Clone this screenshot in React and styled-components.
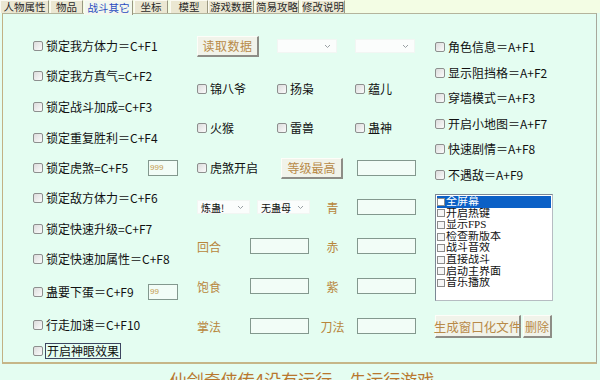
import React from "react";
import styled, { createGlobalStyle } from "styled-components";

const GlobalStyle = createGlobalStyle`
  html, body {
    margin: 0;
    padding: 0;
    width: 600px;
    height: 380px;
    overflow: hidden;
    background: #e4fdf1;
    font-family: "Noto Sans CJK SC", "Liberation Sans", sans-serif;
  }
`;

const Root = styled.div`
  width: 600px;
  height: 380px;
  overflow: hidden;
`;

const TabBar = styled.div`
  display: flex;
  height: 13px;
  background: #f3fde4;
`;

const Tab = styled.div`
  width: ${(p) => p.w}px;
  flex: none;
  margin-right: ${(p) => p.gap}px;
  height: ${(p) => (p.active ? 15 : 13)}px;
  box-sizing: border-box;
  display: flex;
  align-items: center;
  justify-content: center;
  font-size: 10.5px;
  line-height: 12px;
  white-space: nowrap;
  overflow: hidden;
  color: ${(p) => (p.active ? "#2a4cc0" : "#2a2a2a")};
  background: ${(p) => (p.active ? "#f2f8ee" : "#ebe7d2")};
  border-top: 1px solid #fbfaf2;
  border-left: 1px solid #fbfaf2;
  border-right: 1px solid #9a9780;
  position: relative;
  z-index: ${(p) => (p.active ? 2 : 1)};
`;

const Panel = styled.div`
  display: flex;
  margin-left: 2px;
  width: 595px;
  height: 351px;
  box-sizing: border-box;
  background: #e4fdf1;
  border-top: 1px solid #b4b49c;
  border-left: 1px solid #c2b184;
  border-right: 1px solid #a7a89c;
  border-bottom: 2px solid #c6b688;
`;

const LeftCol = styled.div`
  width: 194px;
  box-sizing: border-box;
  padding: 17px 0 0 30px;
  display: flex;
  flex-direction: column;
`;

const MidCol = styled.div`
  width: 238px;
  display: flex;
  flex-direction: column;
`;

const RightCol = styled.div`
  width: 150px;
  box-sizing: border-box;
  padding-top: 20px;
  display: flex;
  flex-direction: column;
`;

const LeftRow = styled.div`
  height: ${(p) => p.h}px;
  width: 145px;
  display: flex;
  align-items: center;
  justify-content: space-between;
`;

const MidRow = styled.div`
  height: 24px;
  margin-top: ${(p) => p.top}px;
  display: flex;
  align-items: center;
`;

const Cell = styled.div`
  width: ${(p) => p.w}px;
  flex: none;
  display: flex;
  align-items: center;
  justify-content: ${(p) => (p.center ? "center" : "flex-start")};
`;

const RightRow = styled.div`
  height: ${(p) => p.h}px;
  display: flex;
  align-items: center;
`;

const Check = styled.label`
  display: flex;
  align-items: center;
  gap: 3px;
  font-size: 12px;
  line-height: 14px;
  color: #111;
  white-space: nowrap;
`;

const Box = styled.span`
  width: 8px;
  height: 8px;
  flex: none;
  border: 1px solid #8d8f8e;
  border-radius: 2px;
  background: linear-gradient(135deg, #dcdcdc, #fbfbfb);
`;

const Focus = styled.span`
  outline: 1px solid #3d4560;
  padding: 0 1px;
`;

const Btn = styled.div`
  width: ${(p) => p.w}px;
  height: ${(p) => p.h}px;
  box-sizing: border-box;
  display: flex;
  align-items: center;
  justify-content: center;
  font-size: ${(p) => p.fs || 12}px;
  color: #b88a48;
  background: #f1f3ea;
  border-top: 1px solid #fdfdf8;
  border-left: 1px solid #fdfdf8;
  border-right: 2px solid #8d8d86;
  border-bottom: 2px solid #8d8d86;
  white-space: nowrap;
  letter-spacing: ${(p) => p.ls || 0}px;
`;

const Select = styled.div`
  width: ${(p) => p.w}px;
  height: 14px;
  box-sizing: border-box;
  background: #fbfdfc;
  border: 1px solid #f2f6f3;
  display: flex;
  align-items: center;
  justify-content: space-between;
  padding: 0 5px 0 3px;
  font-size: 10px;
  color: #111;
`;

const Chevron = () => (
  <svg width="7" height="5" viewBox="0 0 7 5">
    <path d="M1 1 L3.5 3.5 L6 1" fill="none" stroke="#9aa0a4" strokeWidth="1" />
  </svg>
);

const Input = styled.div`
  width: ${(p) => p.w}px;
  height: 16px;
  box-sizing: border-box;
  border: 1px solid #83988e;
  background: #f2fdf7;
  font-size: 8px;
  line-height: 14px;
  color: #c29a4c;
  padding-left: 1px;
  font-family: "Liberation Sans", sans-serif;
`;

const Label = styled.span`
  font-size: 12px;
  color: #b8863c;
`;

const ListBox = styled.div`
  margin-top: 7px;
  width: 118px;
  height: 107px;
  box-sizing: border-box;
  background: #fff;
  border-top: 1px solid #7b8794;
  border-left: 1px solid #7b8794;
  border-right: 1px solid #b6bcc2;
  border-bottom: 1px solid #b6bcc2;
  padding: 1px;
`;

const ListItem = styled.div`
  height: 11.6px;
  display: flex;
  align-items: center;
  gap: 1px;
  overflow: hidden;
  font-size: 11px;
  line-height: 11.6px;
  color: ${(p) => (p.sel ? "#fff" : "#111")};
  background: ${(p) => (p.sel ? "#0b60c6" : "transparent")};
  font-family: "Liberation Serif", "Noto Sans CJK SC", serif;
`;

const SmallBox = styled.span`
  width: 6px;
  height: 6px;
  flex: none;
  border: 1px solid #8c8c8c;
  background: ${(p) => (p.sel ? "#fff" : "#f6f6f6")};
`;

const ButtonRow = styled.div`
  margin-top: 14px;
  display: flex;
  gap: 2px;
`;

const Status = styled.div`
  text-align: center;
  padding-top: 5px;
  padding-left: 4px;
  font-size: 17px;
  line-height: 22px;
  color: #b8772e;
  white-space: nowrap;
`;

const tabs = [
  ["人物属性", 49, 1],
  ["物品", 33, 1],
  ["战斗其它", 49, 1],
  ["坐标", 34, 2],
  ["模型", 38, 0],
  ["游戏数据", 46, 1],
  ["简易攻略", 44, 2],
  ["修改说明", 44, 0],
];

const leftRows = [
  ["锁定我方体力＝C+F1", 30],
  ["锁定我方真气=C+F2", 30],
  ["锁定战斗加成=C+F3", 32],
  ["锁定重复胜利＝C+F4", 30],
  ["锁定虎煞=C+F5", 30, "999"],
  ["锁定敌方体力＝C+F6", 32],
  ["锁定快速升级=C+F7", 30],
  ["锁定快速加属性＝C+F8", 30],
  ["蛊要下蛋＝C+F9", 36, "99"],
  ["行走加速＝C+F10", 30],
];

const rightRows = [
  ["角色信息＝A+F1", 26],
  ["显示阻挡格＝A+F2", 25],
  ["穿墙模式＝A+F3", 26],
  ["开启小地图＝A+F7", 25],
  ["快速剧情＝A+F8", 26],
  ["不遇敌＝A+F9", 25],
];

const listItems = ["全屏幕", "开启热键", "显示FPS", "检查新版本", "战斗音效", "直接战斗", "启动主界面", "音乐播放"];

const CheckItem = ({ children }) => (
  <Check>
    <Box />
    {children}
  </Check>
);

export default function App() {
  return (
    <Root>
      <GlobalStyle />
      <TabBar>
        {tabs.map(([t, w, g], i) => (
          <Tab key={t} w={w} gap={g} active={i === 2}>
            {t}
          </Tab>
        ))}
      </TabBar>
      <Panel>
        <LeftCol>
          {leftRows.map(([t, h, v]) => (
            <LeftRow key={t} h={h}>
              <CheckItem>{t}</CheckItem>
              {v && <Input w={30}>{v}</Input>}
            </LeftRow>
          ))}
          <LeftRow h={22}>
            <CheckItem>
              <Focus>开启神眼效果</Focus>
            </CheckItem>
          </LeftRow>
        </LeftCol>

        <MidCol>
          <MidRow top={20}>
            <Cell w={80}>
              <Btn w={62} h={21} ls={0.5}>读取数据</Btn>
            </Cell>
            <Cell w={78}>
              <Select w={60}>
                <span />
                <Chevron />
              </Select>
            </Cell>
            <Cell w={62}>
              <Select w={60}>
                <span />
                <Chevron />
              </Select>
            </Cell>
          </MidRow>
          <MidRow top={19}>
            <Cell w={80}><CheckItem>锦八爷</CheckItem></Cell>
            <Cell w={78}><CheckItem>扬枭</CheckItem></Cell>
            <Cell w={62}><CheckItem>蕴儿</CheckItem></Cell>
          </MidRow>
          <MidRow top={15}>
            <Cell w={80}><CheckItem>火猴</CheckItem></Cell>
            <Cell w={78}><CheckItem>雷兽</CheckItem></Cell>
            <Cell w={62}><CheckItem>蛊神</CheckItem></Cell>
          </MidRow>
          <MidRow top={16}>
            <Cell w={84}><CheckItem>虎煞开启</CheckItem></Cell>
            <Cell w={76}>
              <Btn w={62} h={21}>等级最高</Btn>
            </Cell>
            <Cell w={60}><Input w={59} /></Cell>
          </MidRow>
          <MidRow top={15}>
            <Cell w={60}>
              <Select w={53}>
                <span>炼蛊!</span>
                <Chevron />
              </Select>
            </Cell>
            <Cell w={63}>
              <Select w={53}>
                <span>无蛊母</span>
                <Chevron />
              </Select>
            </Cell>
            <Cell w={37}>
              <Cell w={25} center><Label>青</Label></Cell>
            </Cell>
            <Cell w={60}><Input w={59} /></Cell>
          </MidRow>
          {[
            ["回合", "赤", 15],
            ["饱食", "紫", 16],
            ["掌法", "刀法", 16],
          ].map(([a, b, top]) => (
            <MidRow key={a} top={top}>
              <Cell w={53}><Label>{a}</Label></Cell>
              <Cell w={70}><Input w={59} /></Cell>
              <Cell w={37}>
                <Cell w={25} center><Label>{b}</Label></Cell>
              </Cell>
              <Cell w={60}><Input w={59} /></Cell>
            </MidRow>
          ))}
        </MidCol>

        <RightCol>
          {rightRows.map(([t, h]) => (
            <RightRow key={t} h={h}>
              <CheckItem>{t}</CheckItem>
            </RightRow>
          ))}
          <ListBox>
            {listItems.map((t, i) => (
              <ListItem key={t} sel={i === 0}>
                <SmallBox sel={i === 0} />
                {t}
              </ListItem>
            ))}
          </ListBox>
          <ButtonRow>
            <Btn w={86} h={23} fs={12.5}>生成窗口化文件</Btn>
            <Btn w={29} h={23}>删除</Btn>
          </ButtonRow>
        </RightCol>
      </Panel>
      <Status>仙剑奇侠传4没有运行，先运行游戏</Status>
    </Root>
  );
}
